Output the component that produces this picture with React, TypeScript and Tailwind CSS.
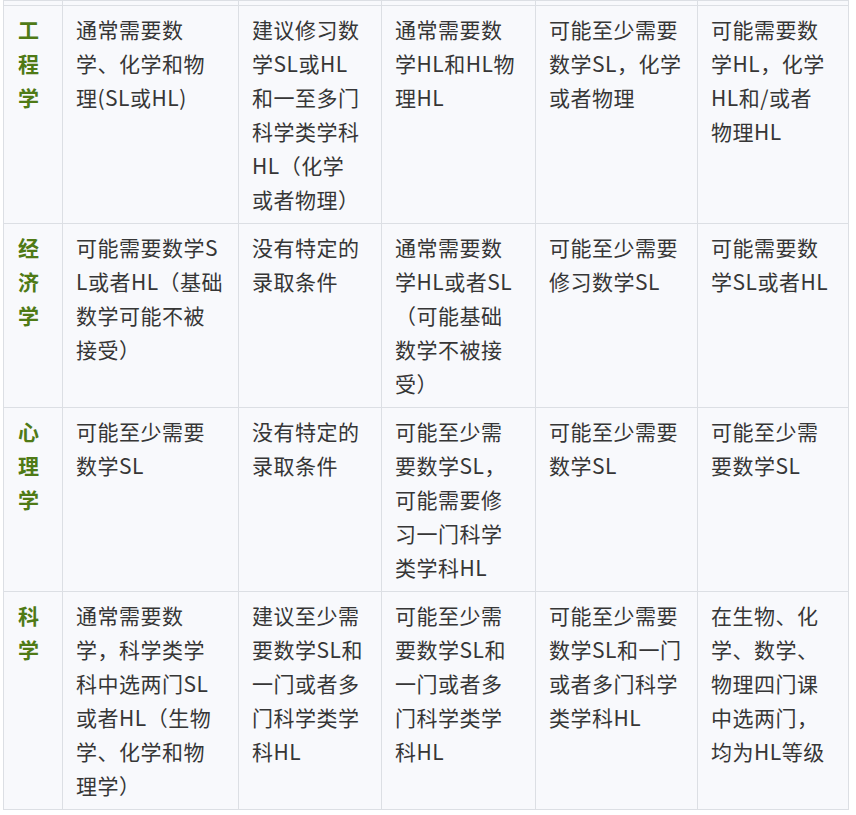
const rows: { head: string[]; cells: string[][] }[] = [
  {
    head: ["工", "程", "学"],
    cells: [
      ["通常需要数", "学、化学和物", "理(SL或HL)"],
      ["建议修习数", "学SL或HL", "和一至多门", "科学类学科", "HL（化学", "或者物理）"],
      ["通常需要数", "学HL和HL物", "理HL"],
      ["可能至少需要", "数学SL，化学", "或者物理"],
      ["可能需要数", "学HL，化学", "HL和/或者", "物理HL"],
    ],
  },
  {
    head: ["经", "济", "学"],
    cells: [
      ["可能需要数学S", "L或者HL（基础", "数学可能不被", "接受）"],
      ["没有特定的", "录取条件"],
      ["通常需要数", "学HL或者SL", "（可能基础", "数学不被接", "受）"],
      ["可能至少需要", "修习数学SL"],
      ["可能需要数", "学SL或者HL"],
    ],
  },
  {
    head: ["心", "理", "学"],
    cells: [
      ["可能至少需要", "数学SL"],
      ["没有特定的", "录取条件"],
      ["可能至少需", "要数学SL，", "可能需要修", "习一门科学", "类学科HL"],
      ["可能至少需要", "数学SL"],
      ["可能至少需", "要数学SL"],
    ],
  },
  {
    head: ["科", "学"],
    cells: [
      ["通常需要数", "学，科学类学", "科中选两门SL", "或者HL（生物", "学、化学和物", "理学）"],
      ["建议至少需", "要数学SL和", "一门或者多", "门科学类学", "科HL"],
      ["可能至少需", "要数学SL和", "一门或者多", "门科学类学", "科HL"],
      ["可能至少需要", "数学SL和一门", "或者多门科学", "类学科HL"],
      ["在生物、化", "学、数学、", "物理四门课", "中选两门，", "均为HL等级"],
    ],
  },
];

function Lines({ lines }: { lines: string[] }) {
  return (
    <>
      {lines.map((l, i) => (
        <div key={i} className="whitespace-nowrap">
          {l}
        </div>
      ))}
    </>
  );
}

export default function App() {
  return (
    <div className="min-h-screen bg-white pl-[3px] font-['Noto_Sans_CJK_SC','Noto_Sans',sans-serif]">
      <table className="table-fixed border-collapse bg-[#f8f9fc] text-[21px] leading-[34px] tracking-[0.5px] text-[#363636]">
        <colgroup>
          <col className="w-[59px]" />
          <col className="w-[176px]" />
          <col className="w-[143px]" />
          <col className="w-[154px]" />
          <col className="w-[162px]" />
          <col className="w-[151px]" />
        </colgroup>
        <tbody>
          {/* tail of the row above, cut off at the top */}
          <tr className="h-[5px]">
            {[0, 1, 2, 3, 4, 5].map((i) => (
              <td key={i} className="border border-[#dcdfe4] p-0 leading-none" />
            ))}
          </tr>
          {rows.map((r, i) => (
            <tr key={i}>
              <td className="border border-[#dcdfe4] pt-[6px] pb-[7px] pl-[14px] align-top font-bold text-[#4f7a16]">
                <Lines lines={r.head} />
              </td>
              {r.cells.map((c, j) => (
                <td key={j} className="border border-[#dcdfe4] pt-[6px] pb-[7px] pl-[13px] pr-[8px] align-top">
                  <Lines lines={c} />
                </td>
              ))}
            </tr>
          ))}
        </tbody>
      </table>
    </div>
  );
}
